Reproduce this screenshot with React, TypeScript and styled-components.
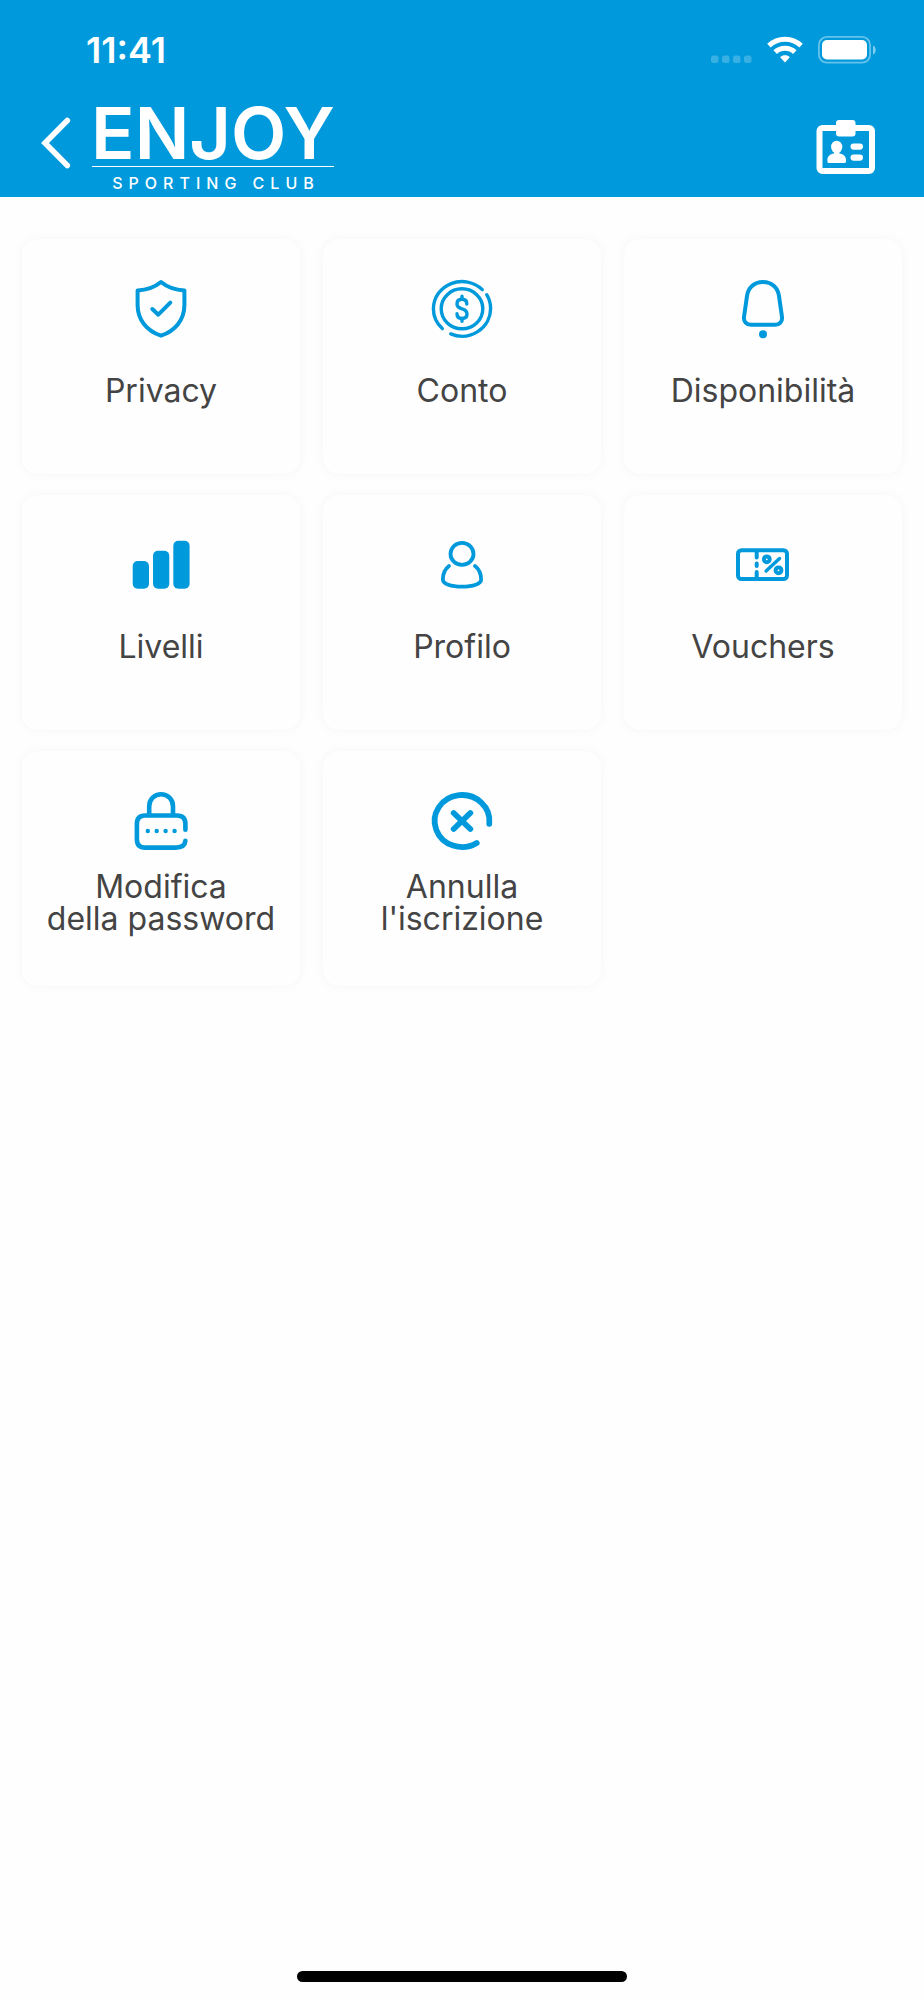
import React from "react";
import styled, { createGlobalStyle } from "styled-components";

const BLUE = "#009adc";

const GlobalStyle = createGlobalStyle`
  *, *::before, *::after { box-sizing: border-box; }
  body {
    margin: 0;
    background: #fefefe;
    color: #444;
    font-family: Inter, "Liberation Sans", sans-serif;
  }
`;

const Screen = styled.div`
  display: flex;
  flex-direction: column;
  min-height: 100vh;
`;

const Header = styled.header`
  background: ${BLUE};
  color: #fff;
`;

const StatusBar = styled.div`
  display: flex;
  align-items: center;
  justify-content: space-between;
  height: 100px;
  padding: 0 48px 0 86px;
`;

const Clock = styled.time`
  font-size: 36px;
  line-height: 40px;
  font-weight: 600;
`;

const StatusIcons = styled.div`
  display: flex;
  align-items: center;
  gap: 15px;
`;

const NavBar = styled.nav`
  display: flex;
  align-items: flex-start;
  height: 97px;
  padding: 0 48px 0 40px;
`;

const IconButton = styled.button<{ $top: number }>`
  display: block;
  padding: 0;
  margin-top: ${(p) => p.$top}px;
  border: 0;
  background: none;
  color: inherit;
  cursor: pointer;
  svg { display: block; }
`;

const Brand = styled.a`
  display: flex;
  flex-direction: column;
  align-items: center;
  width: 242px;
  margin: 6px auto 0 20px;
  color: inherit;
  text-decoration: none;
`;

const BrandName = styled.span`
  font-size: 72px;
  line-height: 53px;
  font-weight: 600;
  height: 60px;
  white-space: nowrap;
`;

const BrandTagline = styled.span`
  width: 100%;
  padding: 9px 0 0 6px;
  border-top: 1px solid #fff;
  font-size: 16px;
  line-height: 14px;
  font-weight: 500;
  letter-spacing: 6px;
  text-align: center;
  white-space: nowrap;
`;

const Menu = styled.main`
  display: grid;
  grid-template-columns: repeat(3, minmax(0, 1fr));
  gap: 21px 23px;
  padding: 42px 22px;
`;

const Card = styled.button`
  display: flex;
  flex-direction: column;
  align-items: center;
  gap: 20px;
  min-height: 235px;
  padding: 40px 8px;
  border: 0;
  border-radius: 16px;
  background: #fefefe;
  box-shadow: 0 0 12px rgba(0, 0, 0, 0.04);
  color: inherit;
  font: inherit;
  cursor: pointer;
`;

const CardIcon = styled.svg`
  flex: none;
  width: 60px;
  height: 60px;
  overflow: visible;
  fill: none;
  stroke: ${BLUE};
  stroke-linecap: round;
  stroke-linejoin: round;
`;

const CardLabel = styled.span`
  display: flex;
  align-items: center;
  min-height: 64px;
  font-size: 32px;
  line-height: 32px;
  font-weight: 400;
  text-align: center;
  white-space: pre-line;
`;

const Footer = styled.footer`
  display: flex;
  justify-content: center;
  margin-top: auto;
  padding-bottom: 18px;
`;

const HomeIndicator = styled.div`
  width: 330px;
  height: 11px;
  border-radius: 6px;
  background: #000;
`;

const SignalDots = () => (
  <svg width="41" height="28" viewBox="0 0 41 28" fill="#fff" fillOpacity="0.22" aria-hidden="true">
    {[0, 11, 22, 33].map((x) => (
      <rect key={x} x={x} y="19.5" width="7.5" height="7.5" rx="2.5" />
    ))}
  </svg>
);

const Wifi = () => (
  <svg width="36" height="28" viewBox="0 0 36 28" fill="none" stroke="#fff" strokeWidth="5" aria-hidden="true">
    <path d="M1.9 9.7 C11 1.2 25 1.2 34.1 9.7" />
    <path d="M8.2 16.1 C13.5 10.9 22.5 10.9 27.8 16.1" />
    <path d="M13.2 21.2 C15.8 18.6 20.2 18.6 22.8 21.2 L18 26.4 Z" fill="#fff" stroke="none" />
  </svg>
);

const Battery = () => (
  <svg width="58" height="28" viewBox="0 0 58 28" aria-hidden="true">
    <rect x="0.9" y="0.9" width="51.2" height="25.8" rx="8" fill="none" stroke="#fff" strokeOpacity="0.4" strokeWidth="1.8" />
    <rect x="4" y="4" width="45" height="19.5" rx="5" fill="#fff" />
    <path d="M55 9.5 C58.6 11 58.6 17 55 18.5 Z" fill="#fff" fillOpacity="0.5" />
  </svg>
);

const BackChevron = () => (
  <svg width="32" height="54" viewBox="0 0 32 54" fill="none" stroke="#fff" strokeWidth="5.6" strokeLinecap="round" strokeLinejoin="miter" aria-hidden="true">
    <path d="M27.3 4.5 L5 27 L27.3 49.5" />
  </svg>
);

const IdBadge = () => (
  <svg width="60" height="54" viewBox="0 0 60 54" fill="#fff" aria-hidden="true">
    <rect x="3.5" y="8" width="52.5" height="43" rx="3" fill="none" stroke="#fff" strokeWidth="6" />
    <rect x="20" y="0" width="19.5" height="16.5" rx="3" />
    <ellipse cx="20.7" cy="27" rx="5.6" ry="6.2" />
    <path d="M18 30 H23.4 V33.5 C27.5 34 30 36.5 30 40 V41.5 Q30 43 28.5 43 H12.8 Q11.4 43 11.4 41.5 V40 C11.4 36.5 14 34 18 33.5 Z" />
    <rect x="34.5" y="23.5" width="12.5" height="6.2" rx="3.1" />
    <rect x="34.5" y="34.5" width="12.5" height="6.2" rx="3.1" />
  </svg>
);

const items: { label: string; icon: React.ReactNode }[] = [
  {
    label: "Privacy",
    icon: (
      <g strokeWidth="4">
        <path d="M30 3 C24 8 16 11 6.6 11.4 V26 C6.6 41 16 52 30 56.7 C44 52 53.4 41 53.4 26 V11.4 C44 11 36 8 30 3 Z" />
        <path d="M21.3 30 L27.3 35.7 L39.3 23.7" />
      </g>
    ),
  },
  {
    label: "Conto",
    icon: (
      <g strokeWidth="3.4">
        <path d="M50.3 10.6 A28.6 27.4 0 0 0 1.4 29.8 A28.6 27.4 0 0 0 10.3 49.6" />
        <path d="M54.7 15.7 A28.6 27.4 0 0 1 58.6 29.8 A28.6 27.4 0 0 1 18.7 54.9" />
        <ellipse cx="30" cy="29.8" rx="20.8" ry="20" />
        <path d="M34.8 25 C34.8 21.8 33 20.3 30 20.3 C27 20.3 25 22 25 25 C25 28 27 29 30 29.8 C33 30.6 35 32 35 35 C35 38 33 39.5 30 39.5 C27 39.5 25 38 25 34.8" />
        <path d="M30 17.3 V20.3 M30 39.5 V42.2" />
      </g>
    ),
  },
  {
    label: "Disponibilità",
    icon: (
      <g strokeWidth="4">
        <path d="M30 3 C21 3 15 9 14 17 L11 38 C10.4 42.5 13.5 45.8 18 45.8 H42 C46.5 45.8 49.6 42.5 49 38 L46 17 C45 9 39 3 30 3 Z" />
        <circle cx="30" cy="55.2" r="4" fill={BLUE} stroke="none" />
      </g>
    ),
  },
  {
    label: "Livelli",
    icon: (
      <g fill={BLUE} stroke="none">
        <rect x="1.7" y="26" width="16.3" height="27.7" rx="5" />
        <rect x="22" y="15.8" width="16.3" height="37.9" rx="5" />
        <rect x="42.3" y="5.7" width="16.3" height="48" rx="5" />
      </g>
    ),
  },
  {
    label: "Profilo",
    icon: (
      <g strokeWidth="3.8">
        <ellipse cx="30" cy="18.9" rx="11.5" ry="11" />
        <path d="M17 31 C13 34 10.9 39 10.9 44.5 C10.9 49 19 51.7 30 51.7 C41 51.7 49.1 49 49.1 44.5 C49.1 39 47 34 43 31" />
      </g>
    ),
  },
  {
    label: "Vouchers",
    icon: (
      <g strokeWidth="4">
        <rect x="5" y="15.2" width="49" height="28.8" rx="3.5" />
        <path d="M23.7 17 V22.4 M23.7 28.6 V31 M23.7 37 V42" />
        <circle cx="33.8" cy="24.3" r="2.9" />
        <circle cx="45.5" cy="35.3" r="2.9" />
        <path d="M33.1 36 L46.5 23.5" strokeWidth="3.4" />
      </g>
    ),
  },
  {
    label: "Modifica\ndella password",
    icon: (
      <g strokeWidth="4.6">
        <path d="M18.2 24 V15.2 A11.9 12 0 0 1 42 15.2 V24" />
        <path d="M54.4 38.8 V33 C54.4 27.5 51.5 24.5 46 24.5 H14 C8.5 24.5 5.9 27.5 5.9 33 V48 C5.9 53.5 8.5 56.6 14 56.6 H44.5 C50 56.6 54 54.5 54.4 49.8" />
        <g fill={BLUE} stroke="none">
          {[16.8, 25.7, 34.6, 43.6].map((x) => (
            <circle key={x} cx={x} cy="40" r="2.2" />
          ))}
        </g>
      </g>
    ),
  },
  {
    label: "Annulla\nl'iscrizione",
    icon: (
      <g strokeWidth="5.8">
        <path d="M57.3 32.8 A27.4 26 0 1 0 44.7 52" />
        <path d="M21.7 22 L38.3 38 M38.3 22 L21.7 38" />
      </g>
    ),
  },
];

export default function App() {
  return (
    <Screen>
      <GlobalStyle />
      <Header>
        <StatusBar>
          <Clock>11:41</Clock>
          <StatusIcons>
            <SignalDots />
            <Wifi />
            <Battery />
          </StatusIcons>
        </StatusBar>
        <NavBar>
          <IconButton type="button" aria-label="Indietro" $top={16}>
            <BackChevron />
          </IconButton>
          <Brand href="#">
            <BrandName>ENJOY</BrandName>
            <BrandTagline>SPORTING CLUB</BrandTagline>
          </Brand>
          <IconButton type="button" aria-label="Tessera" $top={20}>
            <IdBadge />
          </IconButton>
        </NavBar>
      </Header>
      <Menu>
        {items.map((item) => (
          <Card key={item.label} type="button">
            <CardIcon viewBox="0 0 60 60" aria-hidden="true">
              {item.icon}
            </CardIcon>
            <CardLabel>{item.label}</CardLabel>
          </Card>
        ))}
      </Menu>
      <Footer>
        <HomeIndicator />
      </Footer>
    </Screen>
  );
}
